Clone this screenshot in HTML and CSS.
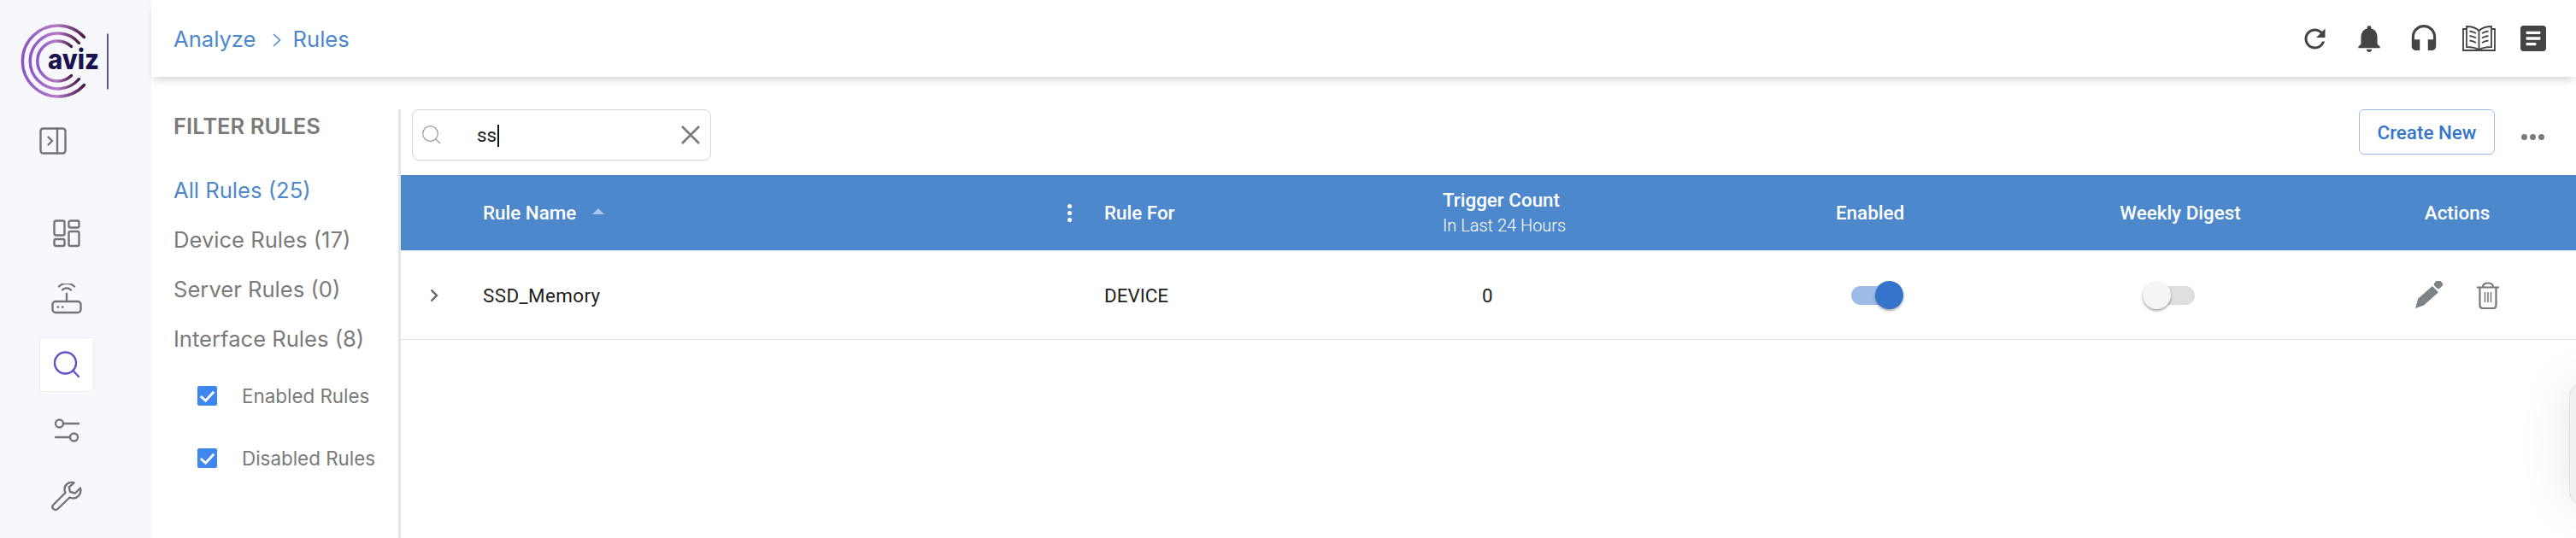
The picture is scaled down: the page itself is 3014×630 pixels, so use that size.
FILE: index.html
```html
<!DOCTYPE html>
<html lang="en">
<head>
    <meta charset="UTF-8">
    <title>Rules</title>
    <link rel="stylesheet" href="styles.css">
</head>
<body>

<!-- SIDEBAR -->
<aside class="sidebar">
    <svg class="logo" viewBox="0 0 110 92">
        <defs>
            <linearGradient id="logo-arc" x1="0" y1="0" x2="1" y2="0">
                <stop offset="0" stop-color="#8a56c8"/>
                <stop offset="0.55" stop-color="#b57bc6"/>
                <stop offset="1" stop-color="#4a1748"/>
            </linearGradient>
        </defs>
        <g fill="none" stroke="url(#logo-arc)" stroke-width="3.4" stroke-linecap="round">
            <path d="M76.5 17.5A41.5 41.5 0 1 0 76.5 73.5"/>
            <path d="M70.5 24.5A32.5 32.5 0 1 0 70.5 66.5"/>
            <path d="M61.5 28.5A23.5 23.5 0 1 0 61.5 62.5"/>
        </g>
        <text class="logo-text" x="34" y="55" textLength="60" lengthAdjust="spacingAndGlyphs">aviz</text>
        <path d="M104 14V78" stroke="#2c2068" stroke-width="1.5" stroke-linecap="round"/>
    </svg>

    <button class="collapse">
        <svg class="icon-32" viewBox="0 0 32 32" fill="none" stroke="#73747c" stroke-width="2.4" stroke-linecap="round" stroke-linejoin="round">
            <rect x="1.5" y="1.5" width="29" height="29" rx="3"/>
            <path d="M21 1.5V30.5M10.500 11.500L15 16L10.500 20.500"/>
        </svg>
    </button>

    <nav class="side-nav">
        <a class="side-item">
            <svg class="icon-36" viewBox="0 0 36 36" fill="none" stroke="#73747c" stroke-width="2.4">
                <rect x="3.500" y="3.500" width="12" height="17" rx="2"/>
                <rect x="20.500" y="3.500" width="12" height="8" rx="2"/>
                <rect x="3.500" y="25" width="12" height="8" rx="2"/>
                <rect x="20.500" y="16" width="12" height="17" rx="2"/>
            </svg>
        </a>
        <a class="side-item">
            <svg class="icon-36" viewBox="0 0 36 36" fill="none" stroke="#73747c" stroke-width="2.4" stroke-linecap="round">
                <rect x="1.500" y="21" width="33" height="13" rx="3.500"/>
                <path d="M18 21V12M13 7.500A7 7 0 0 1 23 7.500M9 3.500A13 13 0 0 1 27 3.500"/>
                <path d="M7.500 27.500H8M13 27.500H13.500"/>
            </svg>
        </a>
        <a class="side-item active">
            <svg class="icon-32" viewBox="0 0 32 32" fill="none" stroke="#6352c9" stroke-width="2.4" stroke-linecap="round">
                <circle cx="14.500" cy="14" r="12.500"/>
                <path d="M23.500 23L30 30"/>
            </svg>
        </a>
        <a class="side-item">
            <svg class="icon-32" viewBox="0 0 32 32" fill="none" stroke="#73747c" stroke-width="2.400" stroke-linecap="round">
                <circle cx="7.500" cy="8" r="4.500"/>
                <path d="M12 8H30"/>
                <circle cx="24.500" cy="24" r="4.500"/>
                <path d="M3 24H20"/>
            </svg>
        </a>
        <a class="side-item">
            <svg class="icon-36" viewBox="0 0 36 36" fill="none" stroke="#73747c" stroke-width="2.400" stroke-linejoin="round">
                <path d="M25 2C20 1 15.500 5 15.500 10C15.500 11.500 16 13 16.500 14L2.500 28C1 29.500 1 31.500 2.500 33C4 34.500 6 34.500 7.500 33L21.500 19.500C23 20.300 24.500 20.500 26 20.500C31 20 34.500 16 34.500 11L34 8.500L28 14.500L22 13L20.800 7.500L26.500 2.300Z"/>
            </svg>
        </a>
    </nav>
</aside>

<div class="main">

    <!-- TOPO -->
    <header class="topbar">
        <div class="breadcrumb">
            <a>Analyze</a>
            <svg class="crumb-sep" viewBox="0 0 10 16" fill="none" stroke="#4d88cd" stroke-width="1.500"><path d="M1 1L8.500 8L1 15"/></svg>
            <a>Rules</a>
        </div>
        <div class="top-icons">
            <svg class="top-refresh" viewBox="3 3 18 18" fill="#444"><path d="M17.650 6.350C16.200 4.900 14.210 4 12 4c-4.420 0-7.990 3.580-7.990 8s3.570 8 7.990 8c3.730 0 6.840-2.550 7.730-6h-2.080c-.82 2.330-3.040 4-5.650 4-3.310 0-6-2.690-6-6s2.690-6 6-6c1.660 0 3.140.69 4.220 1.780L13 11h7V4l-2.350 2.350z"/></svg>
            <svg class="top-bell" viewBox="4 2.500 16 19.500" fill="#444"><path d="M12 22c1.100 0 2-.9 2-2h-4c0 1.100.89 2 2 2zm6-6v-5c0-3.070-1.640-5.640-4.500-6.320V4c0-.83-.67-1.500-1.500-1.500s-1.500.67-1.500 1.500v.68C7.630 5.360 6 7.920 6 11v5l-2 2v1h16v-1l-2-2z"/></svg>
            <svg class="top-head" viewBox="3 1 18 19" fill="#444"><path d="M12 1c-4.970 0-9 4.030-9 9v7c0 1.660 1.340 3 3 3h3v-8H5v-2c0-3.870 3.130-7 7-7s7 3.130 7 7v2h-4v8h3c1.660 0 3-1.340 3-3v-7c0-4.970-4.030-9-9-9z"/></svg>
            <svg class="top-book" viewBox="0 0 39 30" fill="none" stroke="#444" stroke-width="1.800">
                <path d="M19.500 6C16 2.500 11 1 5 1V25C11 25 16 26 19.500 28.500C23 26 28 25 34 25V1C28 1 23 2.500 19.500 6ZM19.500 6V28.500"/>
                <path d="M5 4H1V29H16.500L19.500 29.500L22.500 29H38V4H34"/>
                <path d="M8.500 6.500C11 6.800 13.500 7.500 16 9M8.500 12C11 12.300 13.500 13 16 14.500M8.500 17.500C11 17.800 13.500 18.500 16 20M30.500 6.500C28 6.800 25.500 7.500 23 9M30.500 12C28 12.300 25.500 13 23 14.500M30.500 17.500C28 17.800 25.500 18.500 23 20"/>
            </svg>
            <svg class="top-doc" viewBox="3 3 18 18" fill="#444"><path d="M19 3H5c-1.100 0-2 .9-2 2v14c0 1.100.9 2 2 2h14c1.100 0 2-.9 2-2V5c0-1.100-.9-2-2-2zm-5 14H7v-2h7v2zm3-4H7v-2h10v2zm0-4H7V7h10v2z"/></svg>
        </div>
    </header>

    <div class="content">

        <!-- FILTROS -->
        <section class="filters">
            <h4>FILTER RULES</h4>
            <ul class="filter-list">
                <li class="selected">All Rules (25)</li>
                <li>Device Rules (17)</li>
                <li>Server Rules (0)</li>
                <li>Interface Rules (8)</li>
            </ul>
            <label class="check-row">
                <span class="check"><svg viewBox="0 0 24 24" fill="none" stroke="#fff" stroke-width="3"><path d="M4 12.500L10 18L20 7"/></svg></span>
                Enabled Rules
            </label>
            <label class="check-row">
                <span class="check"><svg viewBox="0 0 24 24" fill="none" stroke="#fff" stroke-width="3"><path d="M4 12.500L10 18L20 7"/></svg></span>
                Disabled Rules
            </label>
        </section>

        <!-- TABELA -->
        <section class="rules">
            <div class="toolbar">
                <div class="search">
                    <svg class="search-icon" viewBox="0 0 22 22" fill="none" stroke="#9a9a9a" stroke-width="1.200"><circle cx="9.500" cy="9.500" r="8.800"/><path d="M16 16L21 21"/></svg>
                    <span class="search-text">ss</span>
                    <svg class="search-clear" viewBox="0 0 22 22" fill="none" stroke="#7a7a7a" stroke-width="2.600"><path d="M1 1L21 21M21 1L1 21"/></svg>
                </div>
                <button class="create-btn">Create New</button>
                <span class="more"><i></i><i></i><i></i></span>
            </div>

            <div class="row head">
                <div></div>
                <div class="name-head">
                    <span>Rule Name</span>
                    <span class="sort"></span>
                    <span class="kebab"><i></i><i></i><i></i></span>
                </div>
                <div>Rule For</div>
                <div class="stacked">Trigger Count<small>In Last 24 Hours</small></div>
                <div class="center">Enabled</div>
                <div class="center">Weekly Digest</div>
                <div class="center actions">Actions</div>
            </div>

            <div class="row body">
                <div class="expand">
                    <svg viewBox="0 0 10 16" fill="none" stroke="#666" stroke-width="2.400"><path d="M1.500 1.500L8 8L1.500 14.500"/></svg>
                </div>
                <div class="rule-name">SSD_Memory</div>
                <div>DEVICE</div>
                <div class="count">0</div>
                <div class="center"><span class="toggle on"><i></i></span></div>
                <div class="center"><span class="toggle"><i></i></span></div>
                <div class="center actions">
                    <svg class="act-edit" viewBox="0 0 33 33" fill="#7c8286">
                        <path d="M0 32L3.300 20.500L20 6L27 13.300L10 28.500Z"/>
                        <rect x="22.500" y="-0.500" width="9" height="9" rx="3" transform="rotate(45 27 4)"/>
                    </svg>
                    <svg class="act-trash" viewBox="0 0 26 32" fill="none" stroke="#74777b" stroke-width="2.200">
                        <path d="M0 6.500H26M7 6C7 3 9 1.500 13 1.500C17 1.500 19 3 19 6"/>
                        <path d="M3.500 7V27C3.500 29.500 5 31 7 31H19C21 31 22.500 29.500 22.500 27V7"/>
                        <path d="M9.500 12V24M13 12V24M16.500 12V24" stroke-width="1.500"/>
                    </svg>
                </div>
            </div>
        </section>
    </div>
</div>

<!-- Widget cortado na borda direita -->
<div class="edge-widget"></div>

</body>
</html>
```

FILE: styles.css
```css
* { box-sizing: border-box; }
html, body { height: 100%; }
body { margin: 0; display: flex; height: 630px; overflow: hidden; font-family: Inter, sans-serif; background: #fff; }
svg { display: block; flex: none; }
ul { list-style: none; margin: 0; padding: 0; }
button { font-family: inherit; }

/* Sidebar */
.sidebar { width: 177px; flex: none; background: #f7f8fb; padding: 26px 0 0 22px; }
.logo { width: 110px; height: 92px; }
.logo-text { font-family: Inter, sans-serif; font-weight: 800; font-size: 33px; fill: #1a1250; }
.collapse { display: block; margin: 31px 0 0 24px; padding: 0; border: none; background: none; }
.side-nav { display: flex; flex-direction: column; gap: 13px; margin: 60px 0 0 24px; }
.side-item { width: 64px; height: 64px; display: flex; align-items: center; justify-content: center; border: 1px solid transparent; border-radius: 3px; }
.side-item.active { background: #fff; border-color: #eceef2; }
.icon-32 { width: 32px; height: 32px; }
.icon-36 { width: 36px; height: 36px; }

/* Topo */
.main { flex: 1; display: flex; flex-direction: column; min-width: 0; }
.topbar { height: 90px; flex: none; display: flex; align-items: center; justify-content: space-between; padding: 0 35px 0 26px; background: #fff; box-shadow: 0 6px 10px -3px rgba(0, 0, 0, 0.18); position: relative; }
.breadcrumb { display: flex; align-items: center; font-size: 25.6px; color: #4d88cd; }
.crumb-sep { width: 10px; height: 16px; margin: 3px 14px 0 19px; }
.top-icons { display: flex; align-items: center; }
.top-refresh { width: 27px; height: 27px; }
.top-bell { width: 26px; height: 31px; margin-left: 37px; }
.top-head { width: 30px; height: 30px; margin: -2px 0 0 36px; }
.top-book { width: 39px; height: 30px; margin-left: 30px; }
.top-doc { width: 30px; height: 30px; margin-left: 29px; }

.content { flex: 1; display: flex; min-height: 0; }

/* Filtros */
.filters { width: 289px; flex: none; padding: 44px 0 0 26px; color: #7a7a7a; }
.filters h4 { margin: 0 0 33px; font-size: 25.6px; line-height: 27px; font-weight: 600; color: #7b7979; }
.filter-list li { font-size: 25.6px; line-height: 58px; height: 58px; white-space: nowrap; }
.filter-list li.selected { color: #4d88cd; }
.check-row { display: flex; align-items: center; height: 73px; font-size: 22.4px; white-space: nowrap; padding-left: 28px; }
.filter-list + .check-row { margin-top: 1px; }
.check { width: 23px; height: 23px; margin-right: 29px; background: #3f86ee; border-radius: 2px; }

/* Tabela */
.rules { flex: 1; min-width: 0; margin-top: 38px; border-left: 3px solid #e3e5ea; font-family: Roboto, sans-serif; }
.toolbar { height: 77px; display: flex; align-items: flex-start; padding-left: 13px; }
.search { width: 350px; height: 60px; display: flex; align-items: center; border: 1px solid #d6d6d6; border-radius: 8px; padding: 0 11px; }
.search-icon { width: 22px; height: 22px; }
.search-text { flex: 1; margin-left: 42px; font-size: 22.4px; font-family: Roboto, sans-serif; color: #222; }
.search-text::after { content: ""; display: inline-block; width: 2px; height: 26px; background: #111; margin-left: 1px; vertical-align: -6px; }
.search-clear { width: 22px; height: 22px; margin-right: 1px; }
.create-btn { width: 159px; height: 53px; margin-left: auto; padding: 0; background: #fff; border: 1px solid #9cbce8; border-radius: 6px; color: #3674cc; font-size: 22.4px; font-weight: 500; font-family: Roboto, sans-serif; }
.more { display: flex; gap: 3px; margin: 29px 37px 0 31px; }
.more i { width: 7px; height: 7px; border-radius: 50%; background: #7a7a7a; }

.row { display: grid; grid-template-columns: 96px 727px 396px 352px 296px 430px 1fr; align-items: center; }
.row.head { height: 89px; background: #4d88cd; color: #fff; font-size: 22.4px; font-weight: 500; border-bottom: 1px solid #e4e6ea; }
.row.body { height: 104px; border-bottom: 1px solid #e2e2e2; color: #222; font-size: 22.4px; }
.rule-name { letter-spacing: 0.4px; }
.center { display: flex; justify-content: center; }
.actions { padding-right: 30px; }
.name-head { display: flex; align-items: center; }
.sort { width: 0; height: 0; margin-left: 19px; margin-top: -4px; border-left: 7px solid transparent; border-right: 7px solid transparent; border-bottom: 7px solid #a9c6ea; }
.kebab { display: flex; flex-direction: column; gap: 3px; margin-left: auto; margin-right: 38px; }
.kebab i { width: 5px; height: 5px; border-radius: 50%; background: #fff; }
.stacked { display: flex; flex-direction: column; line-height: 30px; }
.stacked small { font-size: 20px; font-weight: 300; line-height: 30px; }
.count { padding-left: 46px; }
.expand svg { width: 10px; height: 16px; margin-left: 34px; }

.toggle { position: relative; display: block; width: 60px; height: 22px; margin-right: 26px; border-radius: 11px; background: #dedede; }
.toggle i { position: absolute; top: -6px; left: -1px; width: 33px; height: 33px; border-radius: 50%; background: #f5f5f5; box-shadow: 0 2px 3px rgba(0, 0, 0, 0.35); }
.toggle.on { margin-right: 0; margin-left: 16px; background: #9ebce8; }
.toggle.on i { left: auto; right: -1px; background: #3674cc; }

.act-edit { width: 33px; height: 33px; }
.act-trash { width: 26px; height: 32px; margin-left: 39px; }
.row.body .actions { align-items: center; }

.edge-widget { position: absolute; top: 450px; left: 3007px; width: 40px; height: 140px; background: #f1f1f1; border-radius: 14px; box-shadow: 0 0 60px rgba(0, 0, 0, 0.12), 0 0 2px rgba(0, 0, 0, 0.25); }
```
